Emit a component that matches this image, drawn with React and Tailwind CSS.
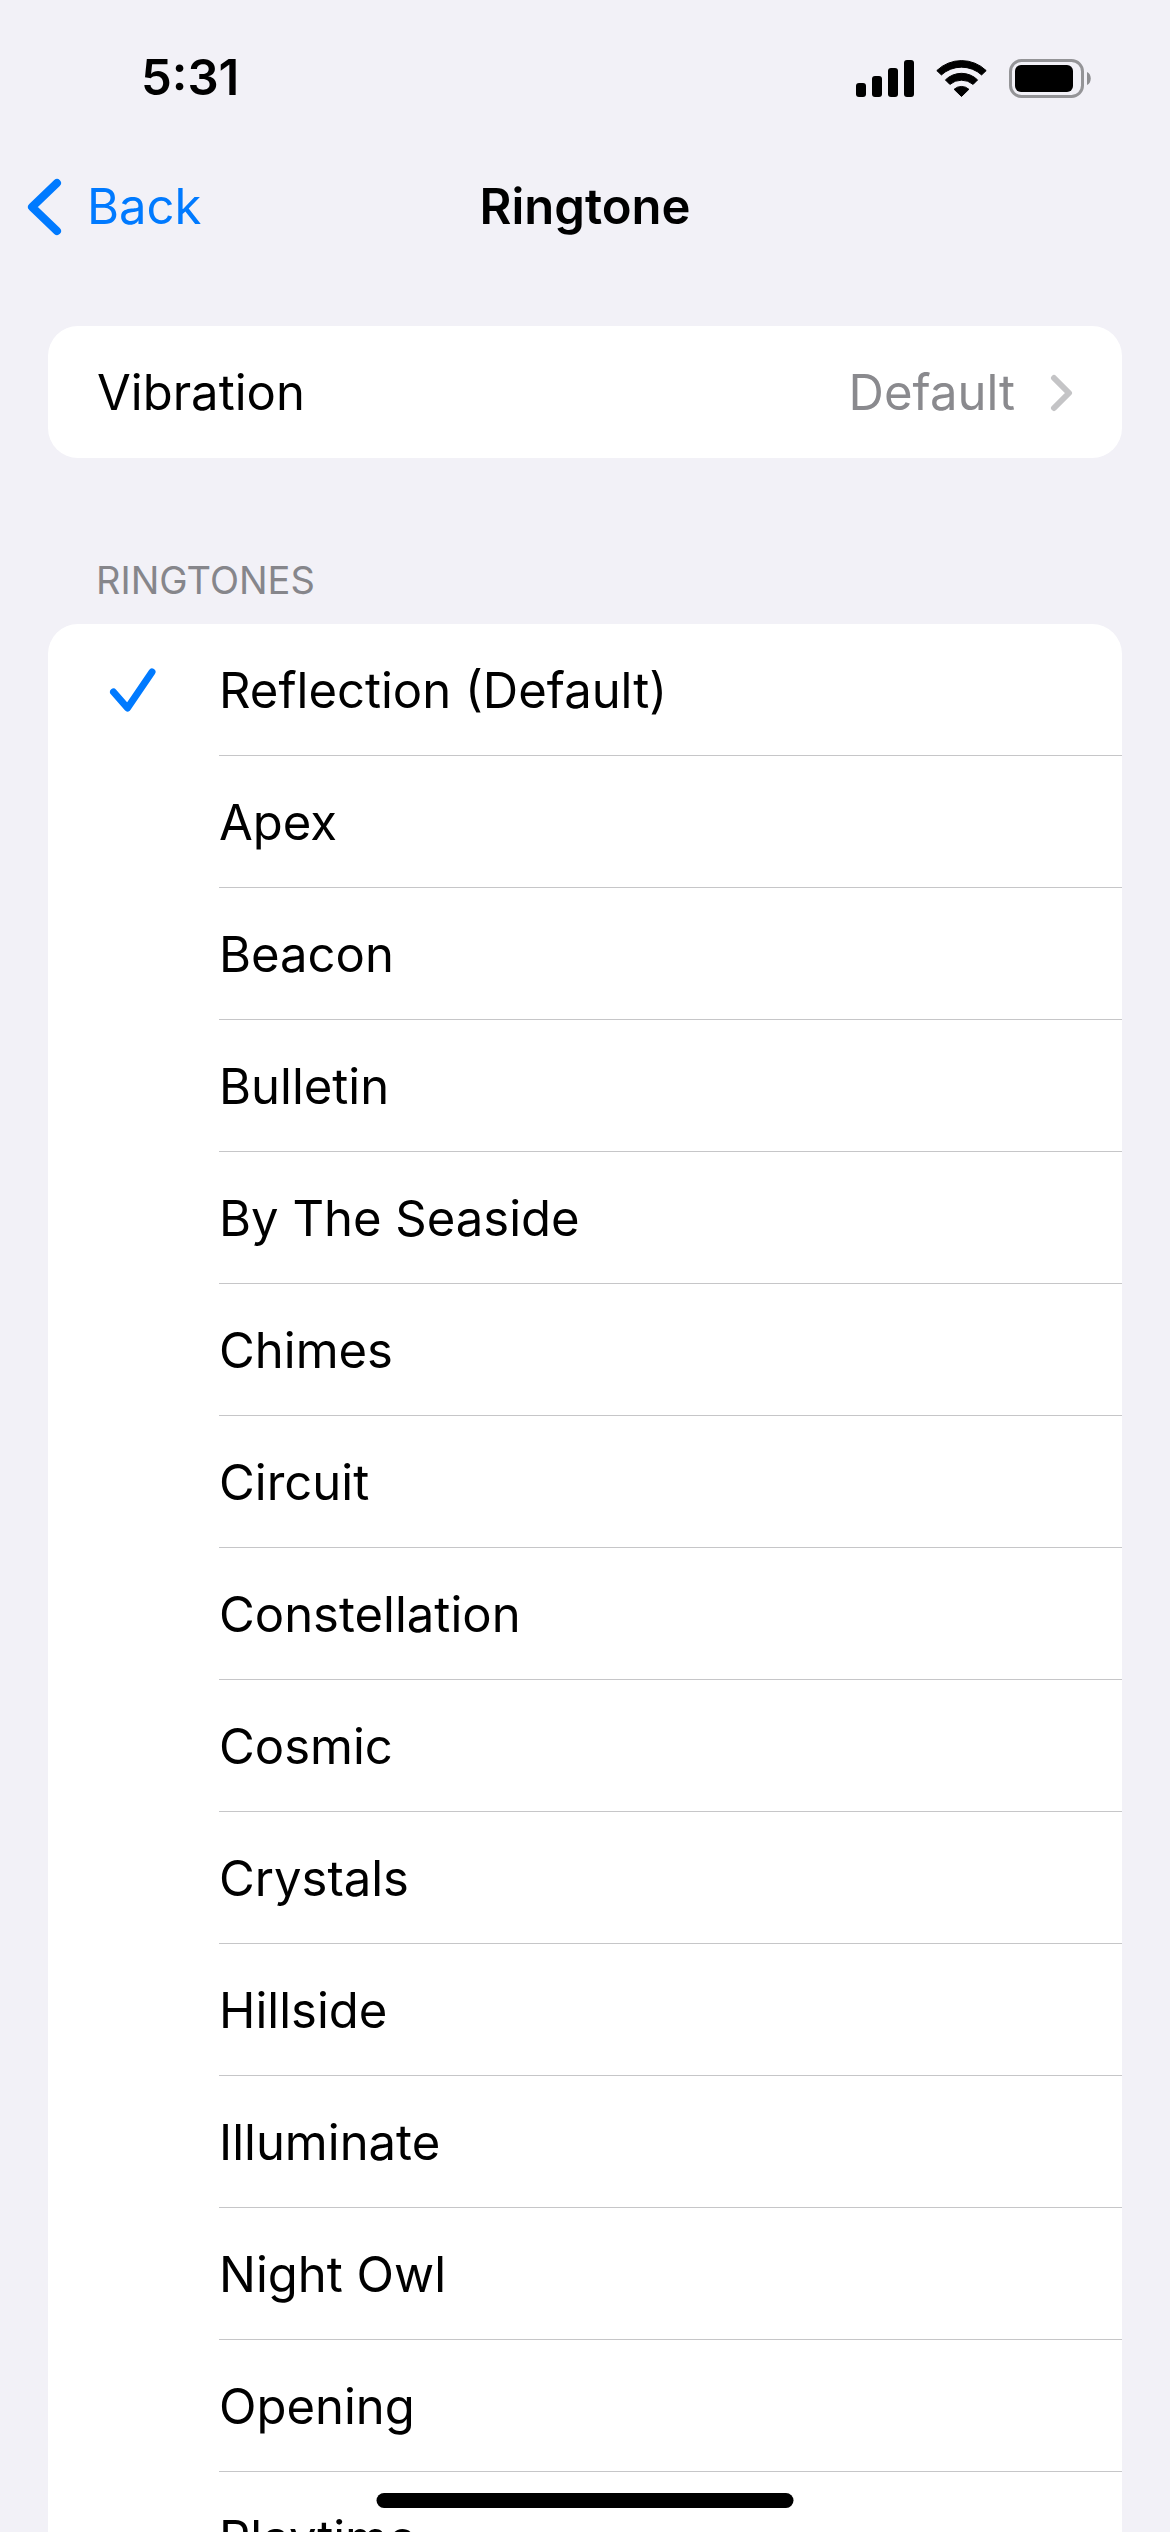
import React, { useState } from 'react';

const RINGTONES = [
    'Reflection (Default)',
    'Apex',
    'Beacon',
    'Bulletin',
    'By The Seaside',
    'Chimes',
    'Circuit',
    'Constellation',
    'Cosmic',
    'Crystals',
    'Hillside',
    'Illuminate',
    'Night Owl',
    'Opening',
    'Playtime',
];

const StatusBar = () => (
    <div className="flex h-[156px] shrink-0 items-center justify-between pl-[141px] pr-[79px]">
        <span className="font-semibold">5:31</span>
        <div className="flex items-center gap-[22px]">
            {/* Signal */}
            <svg width="58" height="37" viewBox="0 0 58 37" aria-hidden="true">
                <rect x="0" y="23" width="10" height="14" rx="3" />
                <rect x="16" y="16" width="10" height="21" rx="3" />
                <rect x="32" y="8" width="10" height="29" rx="3" />
                <rect x="48" y="0" width="10" height="37" rx="3" />
            </svg>
            {/* Wi-Fi */}
            <svg width="51" height="37" viewBox="0 0 51 37" strokeLinejoin="round" stroke="#000" strokeWidth="1" aria-hidden="true">
                <path d="M.8 10.6A35.5 35.5 0 0 1 50.2 10.6L45.6 14.9A30 30 0 0 0 5.4 14.9Z" />
                <path d="M9.4 19.9A23 23 0 0 1 41.6 19.9L37.1 24.4A18 18 0 0 0 13.9 24.4Z" />
                <path d="M18.1 29.3A11 11 0 0 1 32.9 29.3L25.5 36.5Z" />
            </svg>
            {/* Battery */}
            <svg width="82" height="39" viewBox="0 0 82 39" aria-hidden="true">
                <rect x="1.5" y="1.5" width="72" height="36" rx="11" fill="none" stroke="#949497" strokeWidth="3" />
                <rect x="6" y="6" width="58" height="27" rx="6" />
                <path d="M78 13C83 15 83 24 78 26Z" fill="#8e8e91" />
            </svg>
        </div>
    </div>
);

const NavBar = () => (
    <header className="grid h-[102px] shrink-0 grid-cols-3 items-center px-[27px]">
        <button type="button" className="flex items-center gap-[25px] text-[#007aff]">
            <svg width="35" height="58" viewBox="0 0 35 58" fill="none" stroke="currentColor" strokeWidth="8" strokeLinecap="round" strokeLinejoin="round" aria-hidden="true">
                <path d="M30 5L5 29L30 53" />
            </svg>
            Back
        </button>
        <h1 className="text-center font-semibold">Ringtone</h1>
    </header>
);

const RingtoneRow = ({ name, checked, onSelect }) => (
    <label className="flex h-[132px] items-stretch">
        <input type="radio" name="ringtone" checked={checked} onChange={onSelect} className="peer size-0 appearance-none" />
        <span className="invisible flex w-[171px] shrink-0 items-center pl-[61px] text-[#007aff] peer-checked:visible">
            <svg width="47" height="46" viewBox="0 0 47 46" fill="none" stroke="currentColor" strokeWidth="7" strokeLinecap="round" strokeLinejoin="round" aria-hidden="true">
                <path d="M4.5 25L18.5 41L43 5" />
            </svg>
        </span>
        <span className="flex grow items-center border-b border-[#c6c6c8] pt-[3px]">{name}</span>
    </label>
);

const App = () => {
    const [selected, setSelected] = useState(RINGTONES[0]);

    return (
        <div className="flex h-screen flex-col overflow-hidden bg-[#f2f1f7] font-['Inter',sans-serif] text-[49px] leading-[60px] text-black antialiased">
            <StatusBar />
            <NavBar />

            <main className="min-h-0 grow overflow-y-auto px-12 pt-[68px] [scrollbar-width:none]">
                <button type="button" className="flex h-[132px] w-full items-center rounded-[30px] bg-white px-[49px] pt-[2px] text-left">
                    <span className="grow">Vibration</span>
                    <span className="text-[#8a8a8e]">Default</span>
                    <svg className="ml-[35px]" width="23" height="38" viewBox="0 0 23 38" fill="none" stroke="#c4c4c6" strokeWidth="6" strokeLinecap="round" strokeLinejoin="round" aria-hidden="true">
                        <path d="M4 4L19 19L4 34" />
                    </svg>
                </button>

                <fieldset>
                    <legend className="px-[48px] pt-[98px] pb-[20px] text-[38px] leading-[48px] text-[#86868b]">RINGTONES</legend>
                    <div className="rounded-t-[30px] bg-white">
                        {RINGTONES.map(name => (
                            <RingtoneRow key={name} name={name} checked={selected === name} onSelect={() => setSelected(name)} />
                        ))}
                    </div>
                </fieldset>
            </main>

            {/* Home indicator */}
            <div className="fixed bottom-6 left-1/2 h-[15px] w-[417px] -translate-x-1/2 rounded-full bg-black" />
        </div>
    );
};

export default App;
